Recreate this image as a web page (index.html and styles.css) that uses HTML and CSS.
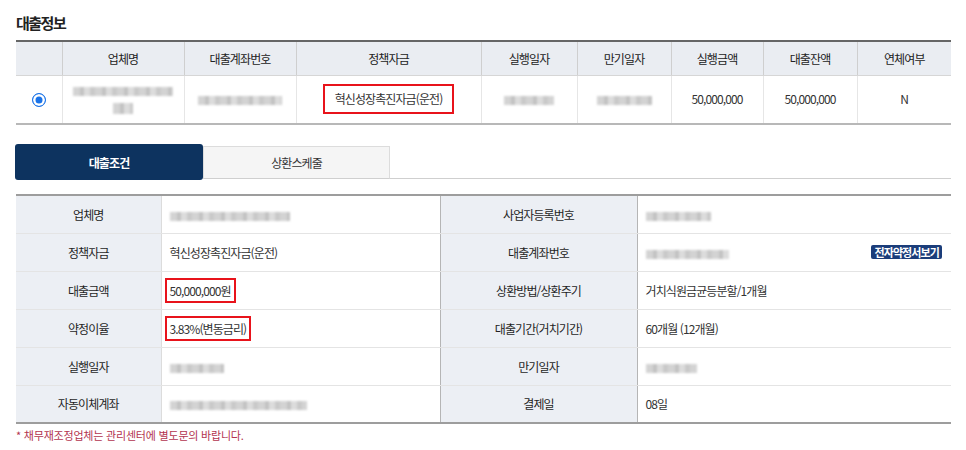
FILE: index.html
```html
<!DOCTYPE html>
<html lang="ko">
<head>
<meta charset="utf-8">
<link rel="stylesheet" href="styles.css">
</head>
<body>
<div class="page">
  <h2 class="title">대출정보</h2>
  <table class="list">
    <colgroup>
      <col style="width:46px"><col style="width:122px"><col style="width:112px"><col style="width:185px"><col style="width:96px"><col style="width:94px"><col style="width:92px"><col style="width:94px"><col style="width:94px">
    </colgroup>
    <thead>
      <tr>
        <th></th><th>업체명</th><th>대출계좌번호</th><th>정책자금</th><th>실행일자</th><th>만기일자</th><th>실행금액</th><th>대출잔액</th><th>연체여부</th>
      </tr>
    </thead>
    <tbody>
      <tr>
        <td><span class="radio"></span></td>
        <td><span class="blur b1"></span><br><span class="blur b2"></span></td>
        <td><span class="blur b3"></span></td>
        <td><span class="redbox big">혁신성장촉진자금(운전)</span></td>
        <td><span class="blur b4"></span></td>
        <td><span class="blur b5"></span></td>
        <td>50,000,000</td>
        <td>50,000,000</td>
        <td>N</td>
      </tr>
    </tbody>
  </table>

  <div class="tabs">
    <div class="tab active">대출조건</div>
    <div class="tab">상환스케줄</div>
    <div class="tab-fill"></div>
  </div>

  <table class="detail">
    <colgroup>
      <col style="width:145px"><col style="width:279px"><col style="width:197px"><col style="width:314px">
    </colgroup>
    <tbody>
      <tr>
        <th>업체명</th><td><span class="blur v1"></span></td>
        <th class="mid">사업자등록번호</th><td><span class="blur v2"></span></td>
      </tr>
      <tr>
        <th>정책자금</th><td>혁신성장촉진자금(운전)</td>
        <th class="mid">대출계좌번호</th><td><span class="blur v3"></span><span class="badge">전자약정서보기</span></td>
      </tr>
      <tr>
        <th>대출금액</th><td><span class="redbox">50,000,000원</span></td>
        <th class="mid">상환방법/상환주기</th><td>거치식원금균등분할/1개월</td>
      </tr>
      <tr>
        <th>약정이율</th><td><span class="redbox">3.83%(변동금리)</span></td>
        <th class="mid">대출기간(거치기간)</th><td>60개월 (12개월)</td>
      </tr>
      <tr>
        <th>실행일자</th><td><span class="blur v4"></span></td>
        <th class="mid">만기일자</th><td><span class="blur v5"></span></td>
      </tr>
      <tr>
        <th>자동이체계좌</th><td><span class="blur v6"></span></td>
        <th class="mid">결제일</th><td>08일</td>
      </tr>
    </tbody>
  </table>
  <p class="note">* 채무재조정업체는 관리센터에 별도문의 바랍니다.</p>
</div>
</body>
</html>
```

FILE: styles.css
```css
* { box-sizing: border-box; }
html, body { margin: 0; padding: 0; background: #fff; }
body {
  font-family: "Noto Sans CJK KR", "Noto Sans", "Liberation Sans", sans-serif;
  font-size: 12px;
  color: #333;
  letter-spacing: -0.9px;
}
.page { padding: 13px 15px 0 16px; width: 966px; }
.title {
  margin: 0 0 7px;
  font-size: 15px;
  line-height: 20px;
  font-weight: 700;
  color: #222;
  letter-spacing: -1.5px;
}
table { border-collapse: collapse; table-layout: fixed; width: 935px; }

.list { border-top: 2px solid #666; border-bottom: 2px solid #b8b8b8; }
.list th {
  height: 34px;
  background: #eaedf2;
  font-weight: 400;
  color: #222;
  border-left: 1px solid #cfcfcf;
  border-bottom: 1px solid #d6d6d6;
  text-align: center;
  padding: 0;
}
.list td {
  height: 49px;
  text-align: center;
  border-left: 1px solid #e6e6e6;
  padding: 0;
  line-height: 14px;
  color: #333;
}
.list th:first-child, .list td:first-child { border-left: none; }

.radio {
  display: inline-block;
  width: 14px; height: 14px;
  border-radius: 50%;
  border: 1.5px solid #1a73e8;
  background: #1a73e8;
  box-shadow: inset 0 0 0 2.5px #fff;
  vertical-align: middle;
}

.blur {
  display: inline-block;
  height: 9px;
  vertical-align: middle;
  background: repeating-linear-gradient(90deg, #cfcfcf 0 7px, #bdbdbd 7px 11px, #d9d9d9 11px 17px, #c4c4c4 17px 22px);
  filter: blur(1px);
  opacity: 0.9;
}
.b1 { width: 100px; margin-bottom: 4px; }
.b2 { width: 20px; height: 11px; }
.b3 { width: 84px; }
.b4 { width: 50px; }
.b5 { width: 55px; }
.v1 { width: 120px; }
.v2 { width: 65px; }
.v3 { width: 83px; }
.v4 { width: 54px; }
.v5 { width: 51px; }
.v6 { width: 137px; }

.redbox {
  display: inline-block;
  border: 2px solid #e8131b;
  padding: 3px 3px;
  margin-left: -5px;
  line-height: 15px;
}
.redbox.big { padding: 5px 10px; margin-left: 0; line-height: 16px; }

.tabs {
  display: flex;
  align-items: flex-start;
  margin-top: 19px;
  height: 36px;
  margin-left: -1px;
}
.tab {
  width: 187px;
  height: 33px;
  margin-top: 2px;
  display: flex;
  align-items: center;
  justify-content: center;
  background: #f5f5f5;
  border: 1px solid #dcdcdc;
  border-bottom-color: #cfcfcf;
  color: #333;
}
.tab.active {
  width: 188px;
  height: 36px;
  margin-top: 0;
  background: #0d335f;
  border: none;
  border-radius: 3px;
  color: #fff;
  font-weight: 700;
}
.tab-fill {
  flex: 1;
  height: 35px;
  border-bottom: 1px solid #cfcfcf;
}

.detail {
  margin-top: 14px;
  border-top: 2px solid #9d9d9d;
  border-bottom: 2px solid #9d9d9d;
}
.detail th, .detail td {
  height: 38px;
  border-bottom: 1px solid #e4e4e4;
  padding: 0;
}
.detail tr:last-child th, .detail tr:last-child td { border-bottom: none; }
.detail th {
  background: #eceff4;
  font-weight: 400;
  color: #1f1f1f;
  text-align: center;
}
.detail td {
  padding: 0 9px 0 8px;
  text-align: left;
  color: #333;
  border-left: 1px solid #dcdcdc;
}
.detail th.mid { border-left: 1px solid #b5b5b5; border-right: 1px solid #b5b5b5; }

.badge {
  float: right;
  background: #1b3d7a;
  color: #fff;
  font-size: 11px;
  font-weight: 700;
  line-height: 14px;
  padding: 0 3px;
  border-radius: 2px;
  margin-top: 1px;
}

.note {
  margin: 4px 0 0;
  font-size: 11px;
  line-height: 14px;
  letter-spacing: -0.2px;
  color: #b3344f;
}
```
